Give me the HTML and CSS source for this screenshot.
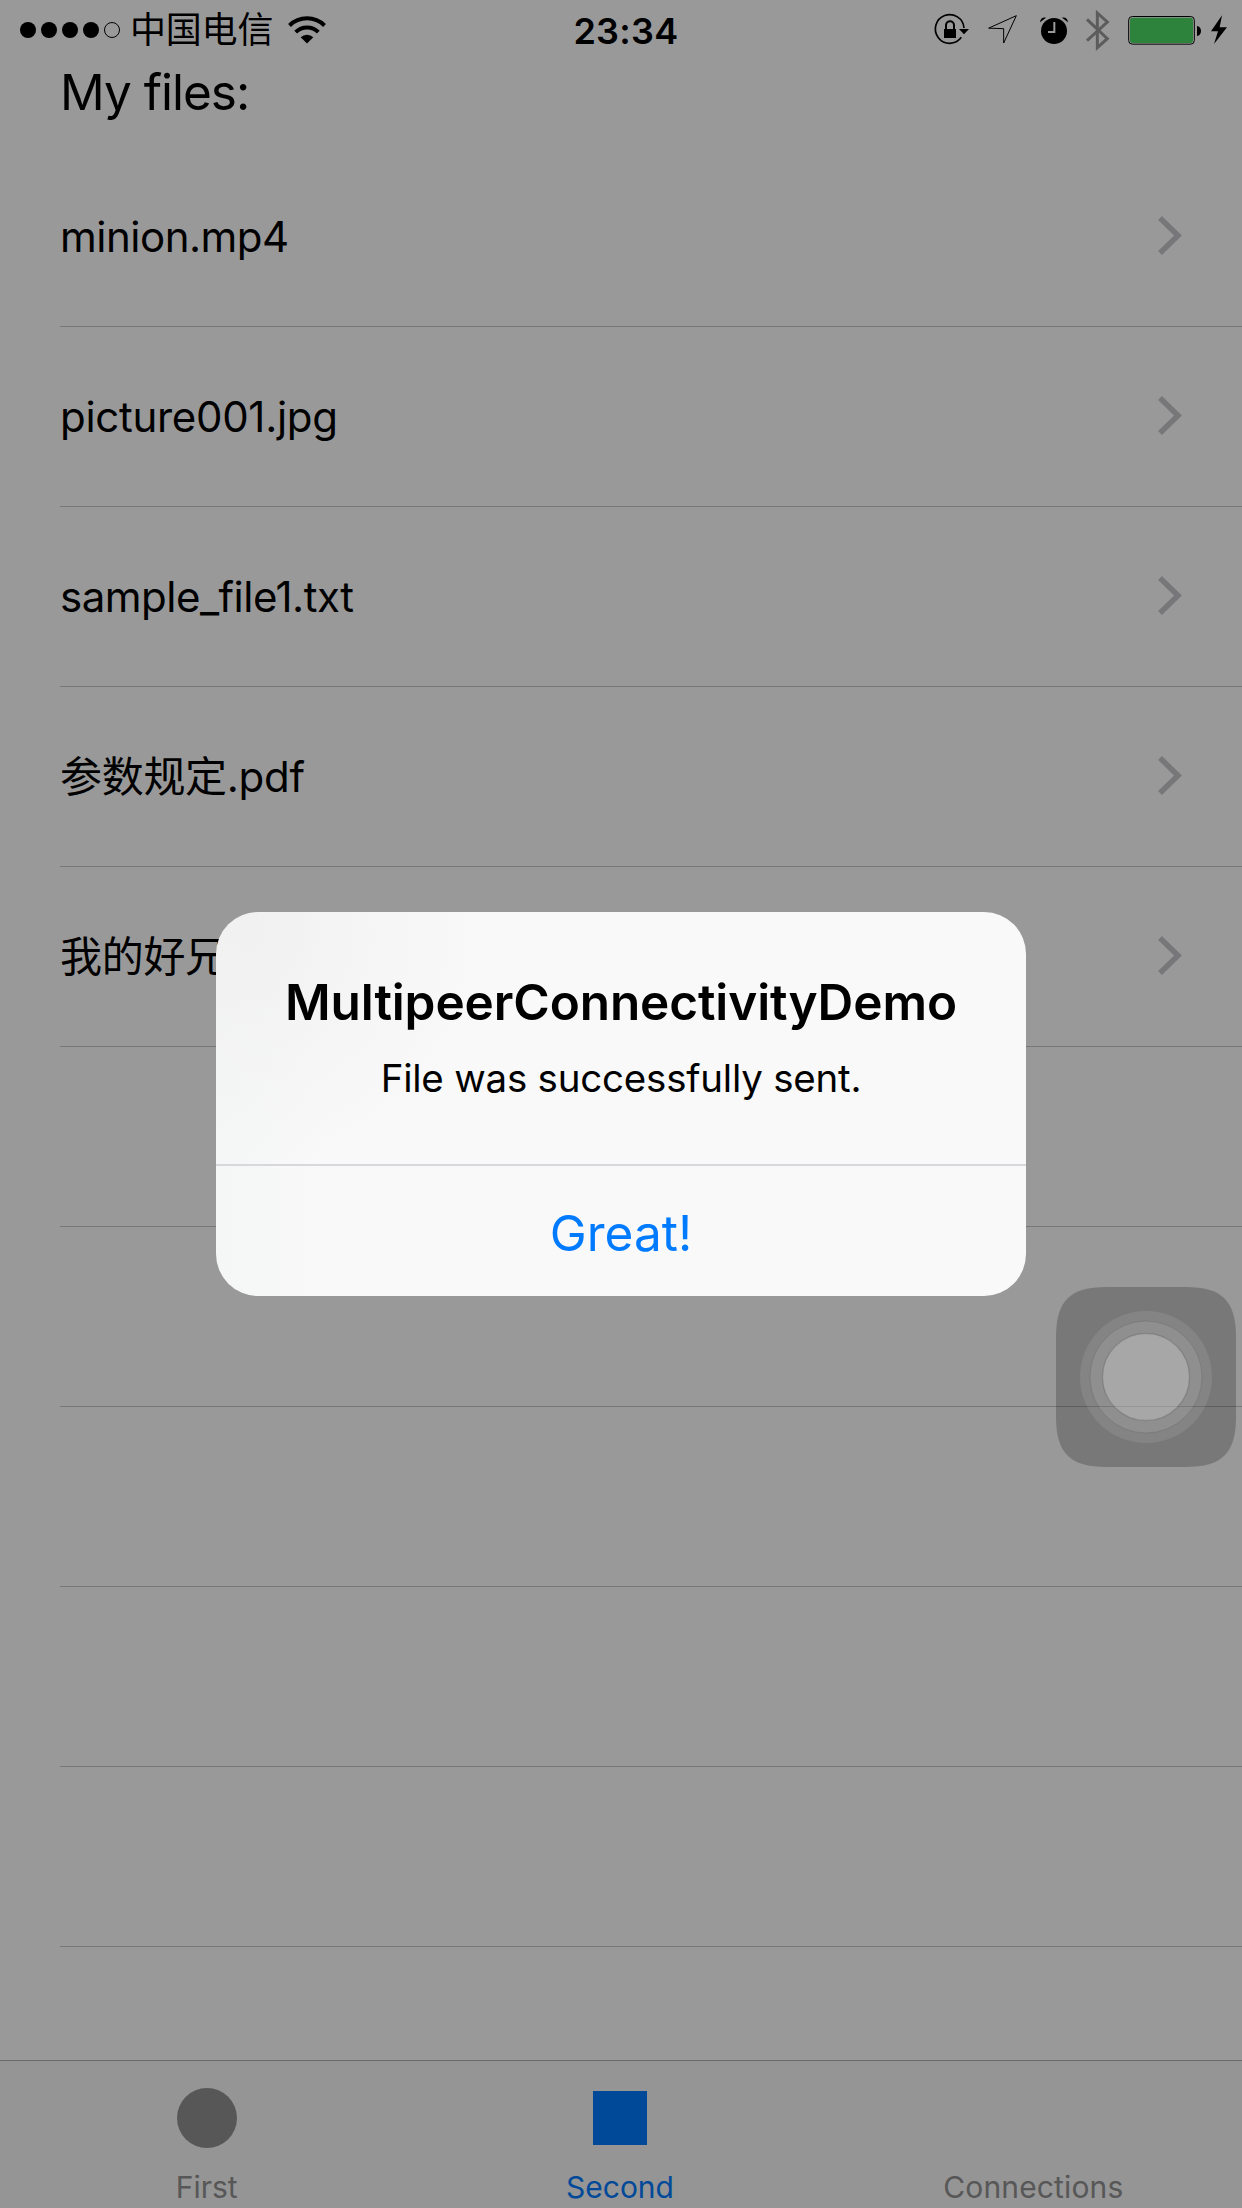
FILE: index.html
```html
<!DOCTYPE html>
<html lang="en">
<head>
<meta charset="utf-8">
<title>My files</title>
<link rel="stylesheet" href="styles.css">
</head>
<body>
<div class="screen">
  <header class="status-bar">
    <div class="carrier">
      <svg class="signal" width="102" height="20" viewBox="0 0 102 20"><g><circle cx="9" cy="10" r="8"/><circle cx="30" cy="10" r="8"/><circle cx="51" cy="10" r="8"/><circle cx="72" cy="10" r="8"/><circle cx="93" cy="10" r="7.5" fill="none" stroke="#000"/></g></svg>
      <span class="carrier-name" lang="zh">中国电信</span>
      <svg class="wifi" width="38" height="28" viewBox="0 0 38 28"><path d="M1.5 9.5A25 25 0 0 1 36.5 9.5" fill="none" stroke="#000" stroke-width="4"/><path d="M7.7 16.2A16 16 0 0 1 30.3 16.2" fill="none" stroke="#000" stroke-width="4"/><path d="M12.7 21.2A9 9 0 0 1 25.3 21.2L19 27.5Z"/></svg>
    </div>
    <time class="clock">23:34</time>
    <div class="indicators">
      <svg width="46" height="60" viewBox="36 0 138 180"><path d="M124 112A43 43 0 1 1 132 84" fill="none" stroke="#000" stroke-width="5"/><path d="M117 87H147L132 103Z"/><path d="M72 87H108V114H72Z"/><path d="M78 88V76A12 12 0 0 1 102 76V88" fill="none" stroke="#000" stroke-width="6"/></svg>
      <svg width="52" height="60" viewBox="174 0 156 180"><path d="M206 84.500L289 47L251 129V86Z" fill="none" stroke="#000" stroke-width="3"/></svg>
      <svg width="47" height="60" viewBox="330 0 141 180"><circle cx="402" cy="93" r="39"/><path d="M360 67C360 56 369 50 378 53Z M444 67C444 56 435 50 426 53Z"/><path d="M403 66V96H384" fill="none" stroke="#fff" stroke-width="6"/></svg>
      <svg width="42" height="60" viewBox="471 0 126 180"><path d="M501 58L562 116L532 143V39L562 66L501 122" fill="none" stroke="#999" stroke-width="9"/></svg>
      <svg width="87" height="60" viewBox="597 0 261 180"><rect x="626" y="49.500" width="197" height="83" rx="11" fill="#fff" stroke="#000" stroke-width="3"/><rect x="630" y="53" width="189" height="76" rx="8" fill="#4cd964"/><path d="M831 78C847 79 847 107 831 108Z"/></svg>
      <svg width="36" height="60" viewBox="858 0 108 180"><path d="M906 46L873 94H894L882 132L921 82H899Z"/></svg>
    </div>
  </header>
  <main class="files">
    <h1 class="title">My files:</h1>
    <ul class="list">
      <li class="row"><span class="name-tight">minion.mp4</span><svg class="chevron" width="24" height="40" viewBox="0 0 24 40"><path d="M2 2L20 19.500L2 37"/></svg></li>
      <li class="row"><span class="name">picture001.jpg</span><svg class="chevron" width="24" height="40" viewBox="0 0 24 40"><path d="M2 2L20 19.500L2 37"/></svg></li>
      <li class="row"><span class="name-tight">sample_file1.txt</span><svg class="chevron" width="24" height="40" viewBox="0 0 24 40"><path d="M2 2L20 19.500L2 37"/></svg></li>
      <li class="row"><span class="name" lang="zh">参数规定.pdf</span><svg class="chevron" width="24" height="40" viewBox="0 0 24 40"><path d="M2 2L20 19.500L2 37"/></svg></li>
      <li class="row"><span class="name" lang="zh">我的好兄</span><svg class="chevron" width="24" height="40" viewBox="0 0 24 40"><path d="M2 2L20 19.500L2 37"/></svg></li>
      <li class="row"></li>
      <li class="row"></li>
      <li class="row"></li>
      <li class="row"></li>
      <li class="row"></li>
    </ul>
  </main>
  <nav class="tab-bar">
    <div class="tab"><span class="tab-icon"><i class="dot"></i></span><span class="tab-label">First</span></div>
    <div class="tab active"><span class="tab-icon"><i class="square"></i></span><span class="tab-label">Second</span></div>
    <div class="tab"><span class="tab-icon"></span><span class="tab-label wide">Connections</span></div>
  </nav>
  <div class="overlay">
    <section class="alert" role="alertdialog">
      <div class="alert-body">
        <h2 class="alert-title">MultipeerConnectivityDemo</h2>
        <p class="alert-message">File was successfully sent.</p>
      </div>
      <button class="alert-button">Great!</button>
    </section>
  </div>
  <svg class="assistive" width="180" height="180" viewBox="0 0 180 180"><path d="M0 50C0 14 14 0 50 0H130C166 0 180 14 180 50V130C180 166 166 180 130 180H50C14 180 0 166 0 130Z" fill="#000" fill-opacity=".21"/><circle cx="90" cy="90" r="66" fill="#fff" fill-opacity=".09"/><circle cx="90" cy="90" r="56" fill="#fff" fill-opacity=".09" stroke="#000" stroke-opacity=".1"/><circle cx="90" cy="90" r="43.500" fill="#fff" fill-opacity=".22" stroke="#000" stroke-opacity=".12" stroke-width="1.500"/></svg>
</div>
</body>
</html>
```
FILE: styles.css
```css
* { box-sizing: border-box; }
body { margin: 0; background: #fff; color: #000; font-family: Inter, "Noto Sans CJK SC", sans-serif; }
h1, h2, p, ul { margin: 0; padding: 0; font-weight: 400; }
svg { display: block; flex: none; }

.screen { position: relative; display: flex; flex-direction: column; width: 1242px; height: 2208px; overflow: hidden; }

.status-bar { display: grid; grid-template-columns: 1fr auto 1fr; grid-template-rows: 60px; align-items: start; height: 60px; }
.carrier { display: flex; align-items: center; height: 60px; padding-left: 19px; }
.carrier-name { margin-left: 9px; width: 144px; font-size: 36px; line-height: 62px; letter-spacing: -0.2px; white-space: nowrap; }
.wifi { margin-left: 14px; }
.clock { padding-left: 10px; font-size: 36px; font-weight: 600; line-height: 62px; letter-spacing: 0.3px; }
.indicators { display: flex; justify-content: flex-end; }

.files { flex: 1; }
.title { height: 87px; padding-left: 60px; font-size: 49.500px; line-height: 64px; letter-spacing: -1px; }
.list { list-style: none; }
.row { display: flex; align-items: center; justify-content: space-between; height: 180px; margin-left: 60px; padding: 0 60px 1px 0; border-bottom: 1px solid #c8c7cc; font-size: 42px; line-height: 60px; }
.name, .name-tight { padding-top: 1px; }
.name { letter-spacing: -0.3px; }
.name-tight { letter-spacing: -0.5px; }
.chevron path { fill: none; stroke: #c7c7cc; stroke-width: 5.500; }

.tab-bar { display: grid; grid-template-columns: repeat(3, 1fr); height: 148px; padding-right: 2px; border-top: 1px solid #b2b2b2; background: #f8f8f8; color: #929292; }
.tab { display: flex; flex-direction: column; align-items: center; }
.tab-icon { display: flex; align-items: center; justify-content: center; height: 114px; }
.dot { width: 60px; height: 60px; border-radius: 50%; background: currentColor; }
.square { width: 54px; height: 54px; background: currentColor; }
.tab-label { font-size: 30px; line-height: 25px; }
.wide { letter-spacing: 0.150px; }
.active { color: #007aff; }

.overlay { position: absolute; inset: 0; display: flex; align-items: center; justify-content: center; background: rgba(0, 0, 0, 0.4); }
.alert { width: 810px; height: 384px; border-radius: 42px; overflow: hidden; text-align: center; background: radial-gradient(circle at 30px 20px, #f1f1f1, rgba(249, 249, 249, 0) 240px), linear-gradient(to right, #f5f6f6, #f9f9f9 110px); }
.alert-body { height: 254px; padding-top: 60px; border-bottom: 2px solid #d7d7dc; }
.alert-title { font-size: 49.500px; font-weight: 600; line-height: 60px; letter-spacing: -0.1px; white-space: nowrap; }
.alert-message { margin-top: 16px; font-size: 38.500px; line-height: 60px; letter-spacing: -0.220px; }
.alert-button { display: block; width: 100%; height: 130px; padding: 4px 0 0; border: 0; background: none; color: #007aff; font: 400 49.500px/126px Inter, sans-serif; }

.assistive { position: absolute; left: 1056px; top: 1287px; }
```
